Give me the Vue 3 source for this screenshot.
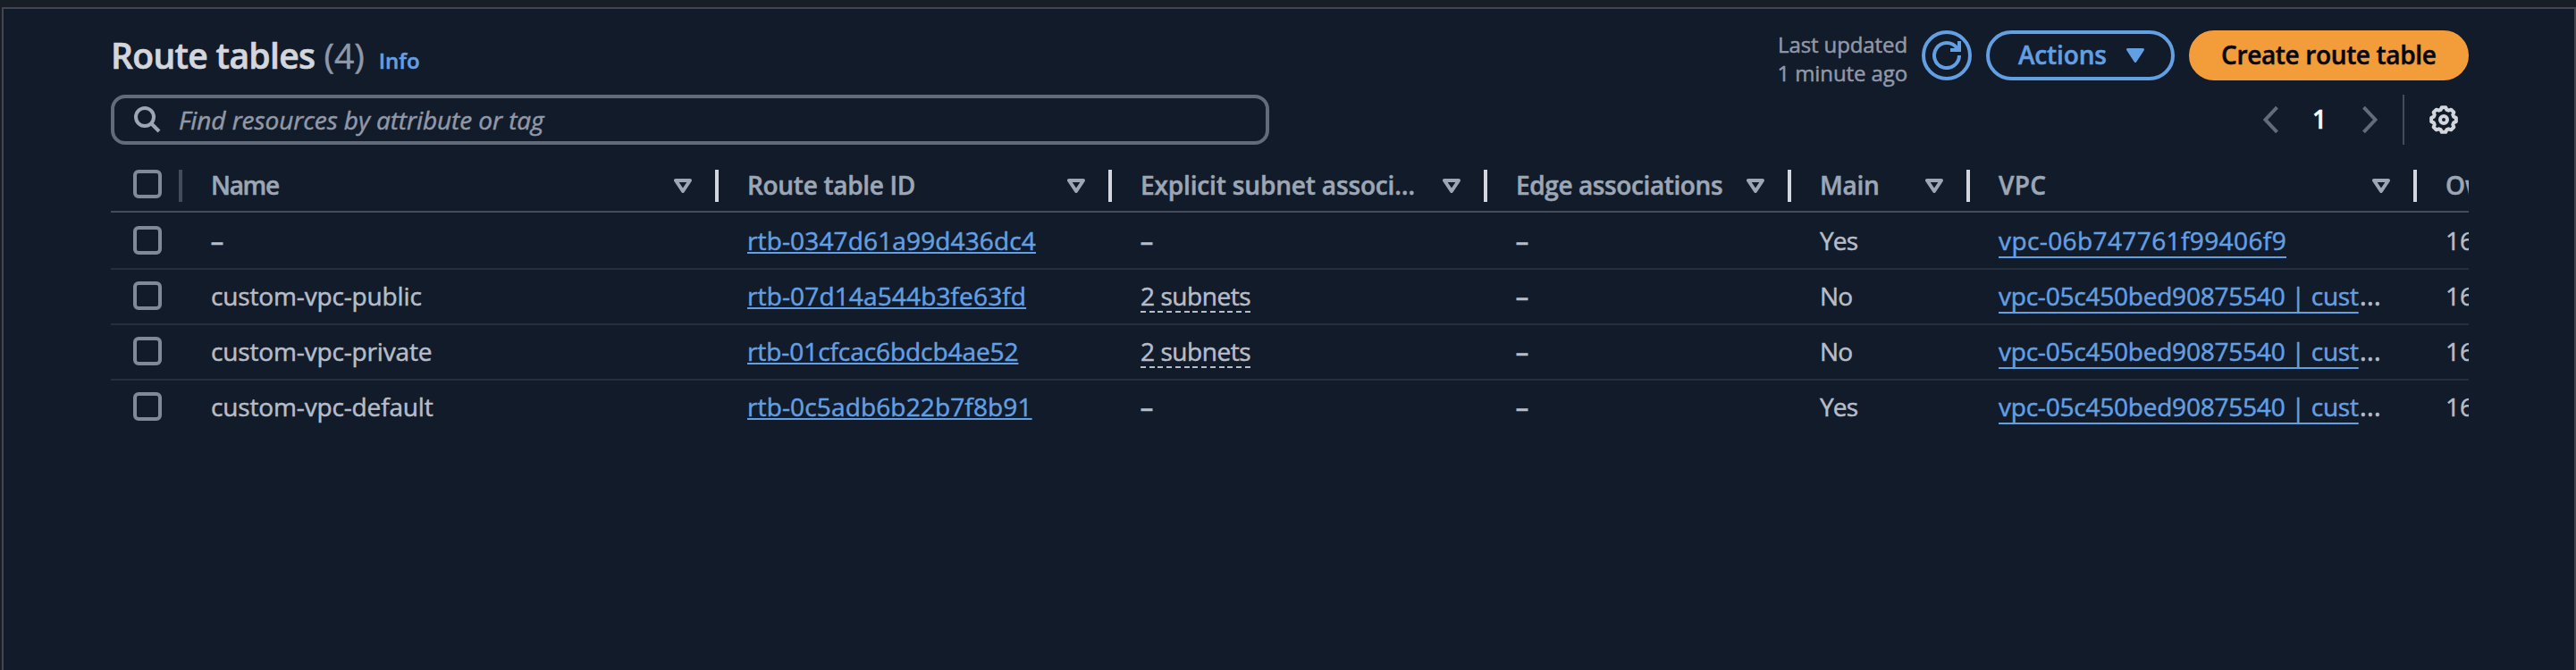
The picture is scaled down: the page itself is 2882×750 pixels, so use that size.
<script setup>
const columns = [
  { key: 'name', label: 'Name' },
  { key: 'rtb', label: 'Route table ID' },
  { key: 'subnets', label: 'Explicit subnet associ…' },
  { key: 'edge', label: 'Edge associations' },
  { key: 'main', label: 'Main' },
  { key: 'vpc', label: 'VPC' },
]

const rows = [
  { name: '–', rtb: 'rtb-0347d61a99d436dc4', subnets: '–', main: 'Yes', vpc: 'vpc-06b747761f99406f9', cut: false },
  { name: 'custom-vpc-public', rtb: 'rtb-07d14a544b3fe63fd', subnets: '2 subnets', main: 'No', vpc: 'vpc-05c450bed90875540 | cust', cut: true },
  { name: 'custom-vpc-private', rtb: 'rtb-01cfcac6bdcb4ae52', subnets: '2 subnets', main: 'No', vpc: 'vpc-05c450bed90875540 | cust', cut: true, tight: true },
  { name: 'custom-vpc-default', rtb: 'rtb-0c5adb6b22b7f8b91', subnets: '–', main: 'Yes', vpc: 'vpc-05c450bed90875540 | cust', cut: true },
]

// Outline of the settings gear: eight teeth around a 32px box.
const gear = (() => {
  const pts = []
  const steps = [[-17, 11.6], [-9, 14], [9, 14], [17, 11.6]]
  for (let k = 0; k < 8; k++) {
    for (const [a, r] of steps) {
      const t = ((k * 45 + a) * Math.PI) / 180
      pts.push(`${(16 + r * Math.cos(t)).toFixed(2)} ${(16 + r * Math.sin(t)).toFixed(2)}`)
    }
  }
  return `M${pts.join('L')}z`
})()
</script>

<template>
  <div class="page">
    <section class="panel">
      <header class="top">
        <div class="heading">
          <h1 class="title">Route tables</h1>
          <span class="count">(4)</span>
          <a class="info">Info</a>
        </div>
        <div class="actions">
          <div class="updated">Last updated<br />1 minute ago</div>
          <button class="refresh">
            <svg width="32" height="32" viewBox="0 0 16 16" fill="none" stroke="currentColor" stroke-width="2">
              <path d="M10 5h5V0" />
              <path d="M15 8a7 7 0 1 1-1.3-4.06L14.6 5" />
            </svg>
          </button>
          <button class="menu">
            <span class="lift">Actions</span>
            <svg class="caret" width="20" height="16" viewBox="0 0 20 16">
              <path d="M1.5 1.5h17L10 14.5z" fill="currentColor" stroke="currentColor" stroke-width="3" stroke-linejoin="round" />
            </svg>
          </button>
          <button class="primary"><span class="lift">Create route table</span></button>
        </div>
      </header>

      <div class="tools">
        <div class="search">
          <svg width="30" height="30" viewBox="0 0 30 30" fill="none" stroke="currentColor" stroke-width="4">
            <circle cx="12" cy="12" r="10" />
            <path d="M19 19l9 9" />
          </svg>
          <span class="placeholder">Find resources by attribute or tag</span>
        </div>
        <div class="paging">
          <svg class="chevron" width="18" height="32" viewBox="0 0 18 32"><path d="M15.5 2.2L2.5 16l13 13.8" /></svg>
          <span class="number lift">1</span>
          <svg class="chevron" width="18" height="32" viewBox="0 0 18 32"><path d="M2.5 2.2l13 13.8-13 13.8" /></svg>
          <i class="rule"></i>
          <svg class="gear" width="32" height="32" viewBox="0 0 32 32" fill="none" stroke="currentColor" stroke-width="4" stroke-linejoin="round">
            <path :d="gear" />
            <circle cx="16" cy="16" r="4" />
          </svg>
        </div>
      </div>

      <div class="table">
        <div class="head">
          <div class="pick">
            <span class="box"></span>
            <i class="bar dim"></i>
          </div>
          <div v-for="c in columns" :key="c.key" class="hcell" :class="`c-${c.key}`">
            <span class="label">{{ c.label }}</span>
            <svg width="20" height="16" viewBox="0 0 20 16">
              <path d="M2 2h16L10 14z" fill="none" stroke="currentColor" stroke-width="4" stroke-linejoin="round" />
            </svg>
            <i class="bar"></i>
          </div>
          <div class="hcell c-owner">Ow</div>
        </div>
        <div v-for="r in rows" :key="r.rtb" class="row">
          <div class="pick"><span class="box"></span></div>
          <div class="cell c-name"><span :class="{ dash: r.name === '–' }">{{ r.name }}</span></div>
          <div class="cell c-rtb"><a :class="{ tight: r.tight }">{{ r.rtb }}</a></div>
          <div class="cell c-subnets"><span :class="r.subnets === '–' ? 'dash' : 'hint'">{{ r.subnets }}</span></div>
          <div class="cell c-edge"><span class="dash">–</span></div>
          <div class="cell c-main">{{ r.main }}</div>
          <div class="cell c-vpc"><a :class="{ cut: r.cut }">{{ r.vpc }}</a><span v-if="r.cut" class="more">…</span></div>
          <div class="cell c-owner">16</div>
        </div>
      </div>
    </section>
  </div>
</template>

<style>
body {
  background: #181e25;
}
</style>

<style scoped>
.page {
  box-sizing: border-box;
  width: 2882px;
  height: 750px;
  padding: 8px 0 0 2px;
  overflow: hidden;
  display: flex;
  color: #b7bdc8;
  font-family: "Open Sans", "Noto Sans", sans-serif;
  font-size: 28px;
  -webkit-text-stroke: 0.5px currentColor;
}
.panel {
  box-sizing: border-box;
  flex: 1;
  min-width: 0;
  padding: 24px 118px 0 120px;
  background: #121b29;
  border: 2px solid #434651;
  border-bottom: 0;
}
.top {
  display: flex;
  justify-content: space-between;
  height: 56px;
}
.heading {
  display: flex;
  align-items: baseline;
  padding-top: 4px;
}
.title {
  margin: 0;
  font-size: 39px;
  line-height: 48px;
  font-weight: 600;
  letter-spacing: -0.65px;
  color: #d3d6dd;
  -webkit-text-stroke-width: 0.7px;
}
.count {
  margin-left: 10px;
  font-size: 39px;
  line-height: 48px;
  color: #9198a7;
}
.info {
  margin-left: 16px;
  font-size: 24px;
  line-height: 32px;
  font-weight: 600;
  color: #639fe3;
}
.actions {
  display: flex;
  align-items: flex-start;
  gap: 16px;
}
.updated {
  margin-right: -1px;
  font-size: 24px;
  line-height: 32px;
  text-align: right;
  letter-spacing: -0.1px;
  color: #9198a7;
}
.updated + .refresh {
  margin-left: 1px;
}
button {
  box-sizing: border-box;
  display: flex;
  align-items: center;
  height: 56px;
  margin: 0;
  padding: 0;
  font: inherit;
  font-weight: 600;
  border: 4px solid #639fe3;
  border-radius: 28px;
  background: none;
  color: #639fe3;
  white-space: nowrap;
}
.lift {
  margin-bottom: 2px;
}
.refresh {
  width: 56px;
  justify-content: center;
}
.menu {
  width: 211px;
  padding-left: 32px;
  letter-spacing: -0.15px;
}
.caret {
  margin-left: 22px;
}
.primary {
  width: 313px;
  padding-left: 32px;
  background: #f29d3a;
  border-color: #f29d3a;
  color: #050813;
  letter-spacing: -0.35px;
}
.tools {
  display: flex;
  justify-content: space-between;
  height: 56px;
  margin-top: 16px;
}
.search {
  box-sizing: border-box;
  display: flex;
  align-items: center;
  width: 1296px;
  padding-left: 22px;
  border: 4px solid #626b79;
  border-radius: 16px;
  color: #9ca6b5;
}
.placeholder {
  margin-left: 20px;
  font-style: italic;
  letter-spacing: -0.08px;
  color: #9198a7;
}
.paging {
  display: flex;
  align-items: center;
  padding-right: 12px;
}
.chevron path {
  fill: none;
  stroke: #626b79;
  stroke-width: 4;
}
.number {
  box-sizing: border-box;
  width: 92px;
  padding-right: 2px;
  text-align: center;
  font-weight: 600;
  color: #fbfbfb;
}
.rule {
  width: 2px;
  height: 56px;
  margin: 0 28px;
  background: #444c5b;
}
.gear {
  color: #d3d6dd;
}
.table {
  overflow: hidden;
}
.head,
.row {
  display: flex;
  box-sizing: border-box;
  width: 2800px;
}
.head {
  height: 76px;
  padding-top: 28px;
  border-bottom: 2px solid #444c5b;
  font-weight: 600;
  color: #9ca6b5;
}
.row {
  height: 62px;
  border-bottom: 2px solid #262f3d;
}
.head + .row {
  height: 64px;
  padding-top: 2px;
}
.row:last-child {
  border-bottom-color: transparent;
}
.pick {
  display: flex;
  flex: none;
  box-sizing: border-box;
  width: 80px;
  padding-left: 25px;
  justify-content: space-between;
}
.row .pick {
  padding-top: 13px;
}
.box {
  box-sizing: border-box;
  width: 32px;
  height: 32px;
  border: 4px solid #808997;
  border-radius: 6px;
}
.bar {
  flex: none;
  width: 4px;
  height: 36px;
  margin-left: 26px;
  background: #d3d6dd;
}
.bar.dim {
  margin: 0;
  background: #444c5b;
}
.hcell {
  display: flex;
  flex: none;
  box-sizing: border-box;
  padding-left: 32px;
  line-height: 34px;
  white-space: nowrap;
}
.hcell svg {
  margin-top: 10px;
}
.label {
  flex: 1;
}
.cell {
  flex: none;
  box-sizing: border-box;
  padding: 9px 0 0 32px;
  line-height: 40px;
  white-space: nowrap;
}
.c-name { width: 600px; }
.c-rtb { width: 440px; }
.c-subnets { width: 420px; }
.c-edge { width: 340px; }
.c-main { width: 200px; }
.c-vpc { width: 500px; }
.c-owner { width: 180px; }
.hcell.c-name { letter-spacing: -1.3px; }
.hcell.c-rtb { letter-spacing: -0.3px; }
.hcell.c-subnets { letter-spacing: -0.15px; }
.hcell.c-edge { letter-spacing: -0.4px; }
.hcell.c-main { letter-spacing: -0.3px; }
.hcell.c-vpc { letter-spacing: 0.3px; }
.cell.c-name { letter-spacing: -0.15px; }
.cell.c-rtb { letter-spacing: 0.14px; }
.cell.c-rtb .tight { letter-spacing: -0.07px; }
.cell.c-main { letter-spacing: -0.8px; }
.cell a {
  color: #639fe3;
  text-decoration: underline;
  text-decoration-thickness: 2px;
  text-underline-offset: 2px;
  text-decoration-skip-ink: none;
}
.cell.c-vpc a {
  letter-spacing: 0.4px;
  text-underline-offset: 7px;
}
.cell.c-vpc a.cut {
  letter-spacing: -0.22px;
}
.more {
  margin-left: 1px;
  font-size: 31px;
  line-height: 1;
}
.dash {
  font-family: "Liberation Sans", sans-serif;
  font-size: 25px;
  font-weight: 700;
}
.hint {
  display: inline-block;
  height: 39px;
  letter-spacing: -0.45px;
  background: repeating-linear-gradient(90deg, #b7bdc8 0 6px, transparent 6px 9.75px) 0 100% / 100% 2px no-repeat;
}
</style>
